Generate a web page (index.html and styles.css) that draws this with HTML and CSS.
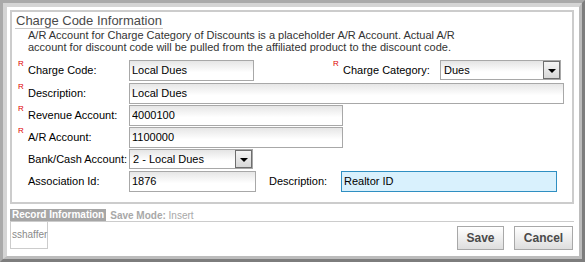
FILE: index.html
```html
<!DOCTYPE html>
<html lang="en">
<head>
    <meta charset="UTF-8">
    <title>Charge Code</title>
    <link rel="stylesheet" href="styles.css">
</head>
<body>
<div class="win">
    <div class="frame">
        <div class="fieldset">
            <div class="legend">Charge Code Information</div>
            <div class="note">A/R Account for Charge Category of Discounts is a placeholder A/R Account. Actual A/R<br>account for discount code will be pulled from the affiliated product to the discount code.</div>
            <div class="row row-first">
                <label class="lbl"><span class="req">R</span>Charge Code:</label>
                <input class="txt w-short" type="text" value="Local Dues">
                <label class="lbl lbl-cat"><span class="req">R</span>Charge Category:</label>
                <div class="sel w-cat"><span>Dues</span><i class="drop"></i></div>
            </div>
            <div class="row">
                <label class="lbl"><span class="req">R</span>Description:</label>
                <input class="txt w-long" type="text" value="Local Dues">
            </div>
            <div class="row">
                <label class="lbl"><span class="req">R</span>Revenue Account:</label>
                <input class="txt w-mid" type="text" value="4000100">
            </div>
            <div class="row">
                <label class="lbl"><span class="req">R</span>A/R Account:</label>
                <input class="txt w-mid" type="text" value="1100000">
            </div>
            <div class="row">
                <label class="lbl"><span class="req no"></span>Bank/Cash Account:</label>
                <div class="sel w-bank"><span>2 - Local Dues</span><i class="drop"></i></div>
            </div>
            <div class="row">
                <label class="lbl"><span class="req no"></span>Association Id:</label>
                <input class="txt w-assoc" type="text" value="1876">
                <label class="lbl lbl-desc">Description:</label>
                <input class="txt txt-focus w-desc" type="text" value="Realtor ID">
            </div>
        </div>
        <div class="rec-bar">
            <span class="rec-tab">Record Information</span>
            <span class="rec-mode"><b>Save Mode:</b> Insert</span>
        </div>
        <div class="rec-foot">
            <div class="user">sshaffer</div>
            <div class="btns">
                <button class="btn btn-save">Save</button>
                <button class="btn btn-cancel">Cancel</button>
            </div>
        </div>
    </div>
</div>
</body>
</html>
```

FILE: styles.css
```css
*{
    padding: 0;
    margin: 0;
    box-sizing: border-box;
}
body{
    background-color: #ffffff;
    font-family: "Liberation Sans", Arial, sans-serif;
    font-size: 11px;
    color: #000000;
}
.win{
    width: 585px;
    height: 262px;
    border-top: 3px solid #a9a9a9;
    border-left: 3px solid #a9a9a9;
    border-right: 3px solid #7d7d7d;
    border-bottom: 3px solid #7d7d7d;
}
.frame{
    height: 100%;
    border-top: 4px solid #d4d4d4;
    border-left: 4px solid #d4d4d4;
    border-right: 3px solid #bcbcbc;
    border-bottom: 3px solid #bcbcbc;
    background-color: #ffffff;
    padding: 3px 0 0 3px;
}
.fieldset{
    width: 564px;
    height: 194px;
    border: 2px solid #cccccc;
    padding: 0 0 0 3px;
}
.legend{
    display: inline-block;
    font-size: 13px;
    color: #4a4a4a;
    padding: 1px 1px 0 1px;
    height: 17px;
    line-height: 16px;
    border-bottom: 1px solid #c8c8c8;
}
.note{
    font-size: 11px;
    line-height: 12px;
    color: #333333;
    padding: 0 0 0 13px;
    height: 29px;
}
.row{
    display: flex;
    align-items: center;
    height: 22px;
}
.row-first{
    height: 24px;
}
.lbl{
    display: flex;
    align-items: flex-start;
    width: 114px;
    flex-shrink: 0;
    padding-left: 3px;
    line-height: 14px;
    white-space: nowrap;
}
.req{
    width: 10px;
    font-size: 8px;
    line-height: 8px;
    color: #e00000;
    margin-top: -3px;
}
.lbl-cat{
    width: 110px;
    margin-left: 76px;
}
.lbl-desc{
    width: 72px;
    margin-left: 13px;
    padding-left: 0;
}
.txt{
    height: 21px;
    border: 1px solid #a8a8a8;
    background: linear-gradient(#e6e6e6, #ffffff 60%);
    font-family: "Liberation Sans", Arial, sans-serif;
    font-size: 11px;
    color: #000000;
    padding: 0 2px;
    outline: none;
}
.txt-focus{
    border-color: #2f8fc2;
    background: #d9f1fd;
}
.w-short{ width: 125px; }
.w-long{ width: 435px; }
.w-mid{ width: 214px; }
.w-assoc{ width: 127px; }
.w-desc{ width: 216px; }
.sel{
    display: flex;
    align-items: center;
    justify-content: space-between;
    height: 20px;
    border: 1px solid #a8a8a8;
    background: linear-gradient(#e4e4e4, #ffffff 60%);
    padding-left: 3px;
    font-size: 11px;
}
.w-cat{ width: 121px; }
.w-bank{ width: 124px; }
.drop{
    width: 17px;
    height: 18px;
    border: 1px solid #6e6e6e;
    background: linear-gradient(#f4f4f4, #d8d8d8);
    position: relative;
}
.drop:after{
    content: "";
    position: absolute;
    left: 4px;
    top: 7px;
    border-left: 4px solid transparent;
    border-right: 4px solid transparent;
    border-top: 4px solid #000000;
}
.rec-bar{
    display: flex;
    align-items: center;
    margin-top: 5px;
    height: 13px;
    width: 564px;
    border-bottom: 1px solid #cccccc;
}
.rec-tab{
    background-color: #a6a6a6;
    color: #ffffff;
    font-weight: bold;
    font-size: 10px;
    line-height: 12px;
    padding: 0 2px;
    height: 12px;
}
.rec-mode{
    color: #a8a8a8;
    font-size: 10px;
    padding-left: 4px;
}
.rec-foot{
    display: flex;
    justify-content: space-between;
    width: 563px;
}
.user{
    width: 38px;
    height: 27px;
    border: 1px solid #cccccc;
    border-top: none;
    color: #8a8a8a;
    font-size: 10px;
    line-height: 26px;
    padding-left: 1px;
    white-space: nowrap;
}
.btns{
    display: flex;
    gap: 10px;
    padding-top: 4px;
}
.btn{
    height: 24px;
    border: 1px solid #a8a8a8;
    background: linear-gradient(#ffffff, #dedede);
    font-family: "Liberation Sans", Arial, sans-serif;
    font-size: 12px;
    font-weight: bold;
    color: #4a4a4a;
}
.btn-save{ width: 47px; }
.btn-cancel{ width: 59px; }
```
